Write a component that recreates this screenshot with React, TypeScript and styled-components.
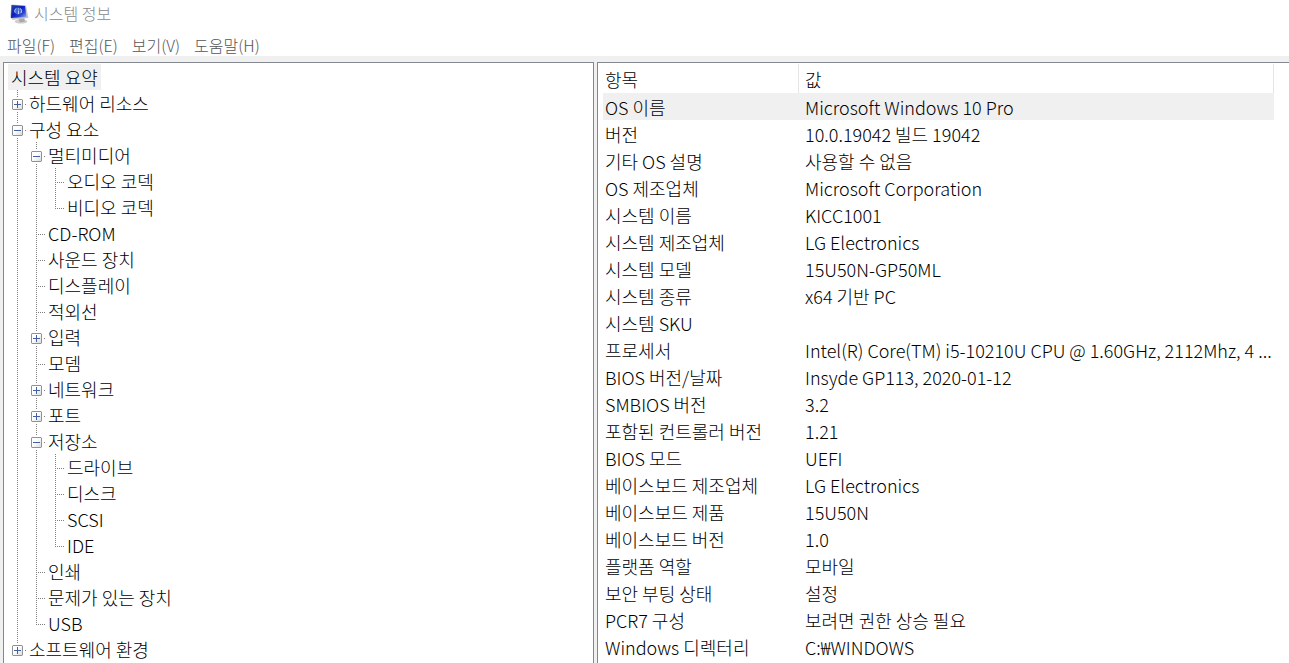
import React from "react";
import styled, { createGlobalStyle } from "styled-components";

const GlobalStyle = createGlobalStyle`
  * { box-sizing: border-box; }
  body {
    margin: 0;
    background: #f0f0f0;
    color: #000;
    font-family: "Noto Sans CJK KR", "Open Sans", sans-serif;
    font-size: 18px;
    font-weight: 300;
  }
  button { font: inherit; color: inherit; border: 0; padding: 0; background: none; }
`;

const Window = styled.div`
  display: flex;
  flex-direction: column;
  height: 100vh;
  overflow: hidden;
`;

const TitleBar = styled.header`
  display: flex;
  align-items: center;
  gap: 5px;
  height: 28px;
  padding-left: 9px;
  background: #fff;
  color: #888;
  font-size: 16px;
  line-height: 26px;
`;

const Title = styled.h1`
  margin: 0;
  padding-bottom: 2px;
  font: inherit;
`;

const MenuBar = styled.nav`
  display: flex;
  gap: 14px;
  height: 28px;
  padding: 4px 7px 0;
  background: #fff;
  color: #555;
  font-size: 16px;
  line-height: 26px;
`;

const MenuItem = styled.button`
  white-space: nowrap;
`;

const Panels = styled.main`
  flex: 1;
  min-height: 0;
  display: grid;
  grid-template-columns: minmax(0, 591fr) minmax(0, 692fr);
  gap: 3px;
  padding: 6px 0 0 3px;
`;

const Panel = styled.section<{ $open?: boolean }>`
  overflow: hidden;
  background: #fff;
  border: 1px solid #828790;
  border-width: ${(p) => (p.$open ? "1px 0 0 1px" : "1px 1px 0 1px")};
  padding: ${(p) => (p.$open ? "1px 15px 0 5px" : "1px 4px 0")};
`;

const Tree = styled.ul`
  margin: 0;
  padding: 0;
  list-style: none;
`;

const TreeRow = styled.li`
  display: flex;
  height: 26px;
  line-height: 26px;
  white-space: nowrap;
`;

const Label = styled.span<{ $selected?: boolean }>`
  padding: ${(p) => (p.$selected ? "0 3px" : "0 2px")};
  background: ${(p) => (p.$selected ? "#f0f0f0" : "none")};
`;

type GuideKind = "line" | "tee" | "end";

const dotsDown = "repeating-linear-gradient(180deg, #808080 0 1px, transparent 1px 2px)";
const dotsAcross = "repeating-linear-gradient(90deg, #808080 0 1px, transparent 1px 2px)";

const Guide = styled.span<{ $kind: GuideKind }>`
  flex: 0 0 19px;
  height: 26px;
  padding: 9px 0 0 4px;
  line-height: 0;
  background-image: ${dotsDown}, ${dotsAcross};
  background-repeat: no-repeat;
  background-position: 9px 0, 9px 14px;
  background-size: ${(p) => (p.$kind === "end" ? "1px 15px" : "1px 26px")},
    ${(p) => (p.$kind === "line" ? "0 0" : "9px 1px")};
`;

const Expander = styled.button`
  display: block;
  width: 11px;
  height: 11px;
  border: 1px solid #919191;
  border-radius: 1px;
  outline: 1px solid #fff;
  background: linear-gradient(135deg, #fff 40%, #dcdcdc);

  svg { display: block; }
`;

const Table = styled.table`
  width: 100%;
  table-layout: fixed;
  border-collapse: separate;
  border-spacing: 0;
`;

const NameCol = styled.col`
  width: 196px;
`;

const HeadCell = styled.th`
  height: 29px;
  padding: 2px 2px 0;
  border-right: 1px solid #e5e5e5;
  font-weight: inherit;
  line-height: 27px;
  text-align: left;

  & + & { padding-left: 6px; }
`;

const Row = styled.tr<{ $selected?: boolean }>`
  background: ${(p) => (p.$selected ? "#f0f0f0" : "none")};
`;

const Cell = styled.td`
  height: 27px;
  padding: 1px 0 0 2px;
  line-height: 26px;
  white-space: nowrap;
  overflow: hidden;

  & + & { padding-left: 6px; }
`;

interface TreeItem {
  label: string;
  guides: GuideKind[];
  expanded?: boolean;
}

const tree: TreeItem[] = [
  { label: "하드웨어 리소스", guides: ["tee"], expanded: false },
  { label: "구성 요소", guides: ["tee"], expanded: true },
  { label: "멀티미디어", guides: ["line", "tee"], expanded: true },
  { label: "오디오 코덱", guides: ["line", "line", "tee"] },
  { label: "비디오 코덱", guides: ["line", "line", "end"] },
  { label: "CD-ROM", guides: ["line", "tee"] },
  { label: "사운드 장치", guides: ["line", "tee"] },
  { label: "디스플레이", guides: ["line", "tee"] },
  { label: "적외선", guides: ["line", "tee"] },
  { label: "입력", guides: ["line", "tee"], expanded: false },
  { label: "모뎀", guides: ["line", "tee"] },
  { label: "네트워크", guides: ["line", "tee"], expanded: false },
  { label: "포트", guides: ["line", "tee"], expanded: false },
  { label: "저장소", guides: ["line", "tee"], expanded: true },
  { label: "드라이브", guides: ["line", "line", "tee"] },
  { label: "디스크", guides: ["line", "line", "tee"] },
  { label: "SCSI", guides: ["line", "line", "tee"] },
  { label: "IDE", guides: ["line", "line", "end"] },
  { label: "인쇄", guides: ["line", "tee"] },
  { label: "문제가 있는 장치", guides: ["line", "tee"] },
  { label: "USB", guides: ["line", "end"] },
  { label: "소프트웨어 환경", guides: ["end"], expanded: false },
];

const rows: [string, string][] = [
  ["OS 이름", "Microsoft Windows 10 Pro"],
  ["버전", "10.0.19042 빌드 19042"],
  ["기타 OS 설명", "사용할 수 없음"],
  ["OS 제조업체", "Microsoft Corporation"],
  ["시스템 이름", "KICC1001"],
  ["시스템 제조업체", "LG Electronics"],
  ["시스템 모델", "15U50N-GP50ML"],
  ["시스템 종류", "x64 기반 PC"],
  ["시스템 SKU", ""],
  ["프로세서", "Intel(R) Core(TM) i5-10210U CPU @ 1.60GHz, 2112Mhz, 4 ..."],
  ["BIOS 버전/날짜", "Insyde GP113, 2020-01-12"],
  ["SMBIOS 버전", "3.2"],
  ["포함된 컨트롤러 버전", "1.21"],
  ["BIOS 모드", "UEFI"],
  ["베이스보드 제조업체", "LG Electronics"],
  ["베이스보드 제품", "15U50N"],
  ["베이스보드 버전", "1.0"],
  ["플랫폼 역할", "모바일"],
  ["보안 부팅 상태", "설정"],
  ["PCR7 구성", "보려면 권한 상승 필요"],
  ["Windows 디렉터리", "C:₩WINDOWS"],
];

const menus = ["파일(F)", "편집(E)", "보기(V)", "도움말(H)"];

function MonitorIcon() {
  return (
    <svg width="20" height="20" viewBox="0 0 20 20" aria-hidden="true">
      <defs>
        <linearGradient id="screen" x1="0" y1="0" x2="1" y2="1">
          <stop offset="0" stopColor="#274a9c" />
          <stop offset="0.45" stopColor="#0c1cc0" />
          <stop offset="0.7" stopColor="#2a45d0" />
          <stop offset="1" stopColor="#a9b9f2" />
        </linearGradient>
      </defs>
      <ellipse cx="12" cy="17.500" rx="6.500" ry="2" fill="#cfcfcf" />
      <path d="M9 14l6-1 1 4.500-5 1z" fill="#a9a9a9" />
      <path d="M2.500 0.500L17 1.500 19.500 14 3.500 16 1 13z" fill="#c3c6cc" />
      <path d="M2.500 1L16 2l1.500 11L2 14z" fill="url(#screen)" />
      <path d="M9 3.500c2.500 0 4 1.500 4 3.500s-1.500 3.500-4 3.500S5.500 9 5.500 7 7 3.500 9 3.500z" fill="#4468d6" />
      <path d="M6 8.500a3.500 3.500 0 0 1 1-4M12 9a3.500 3.500 0 0 0-0.500-4.500M9.500 4.500v1M9.500 6.500v3.500" fill="none" stroke="#b9cdfa" strokeWidth="1" />
    </svg>
  );
}

function ExpandGlyph({ expanded }: { expanded: boolean }) {
  return (
    <svg width="9" height="9" viewBox="0 0 9 9" aria-hidden="true">
      <path d={expanded ? "M1 4h7v1H1z" : "M1 4h7v1H1zM4 1h1v7H4z"} fill="#3f5fa8" />
    </svg>
  );
}

export default function App() {
  return (
    <Window>
      <GlobalStyle />
      <TitleBar>
        <MonitorIcon />
        <Title>시스템 정보</Title>
      </TitleBar>
      <MenuBar>
        {menus.map((m) => (
          <MenuItem key={m} type="button">{m}</MenuItem>
        ))}
      </MenuBar>
      <Panels>
        <Panel>
          <Tree role="tree">
            <TreeRow role="treeitem" aria-selected="true">
              <Label $selected>시스템 요약</Label>
            </TreeRow>
            {tree.map((item) => (
              <TreeRow
                key={item.label}
                role="treeitem"
                aria-level={item.guides.length}
                aria-expanded={item.expanded}
              >
                {item.guides.map((kind, i) => (
                  <Guide key={i} $kind={kind}>
                    {item.expanded !== undefined && i === item.guides.length - 1 && (
                      <Expander type="button" aria-label={item.label}>
                        <ExpandGlyph expanded={item.expanded} />
                      </Expander>
                    )}
                  </Guide>
                ))}
                <Label>{item.label}</Label>
              </TreeRow>
            ))}
          </Tree>
        </Panel>
        <Panel $open>
          <Table>
            <colgroup>
              <NameCol />
              <col />
            </colgroup>
            <thead>
              <tr>
                <HeadCell scope="col">항목</HeadCell>
                <HeadCell scope="col">값</HeadCell>
              </tr>
            </thead>
            <tbody>
              {rows.map(([name, value], i) => (
                <Row key={name} $selected={i === 0}>
                  <Cell>{name}</Cell>
                  <Cell>{value}</Cell>
                </Row>
              ))}
            </tbody>
          </Table>
        </Panel>
      </Panels>
    </Window>
  );
}
